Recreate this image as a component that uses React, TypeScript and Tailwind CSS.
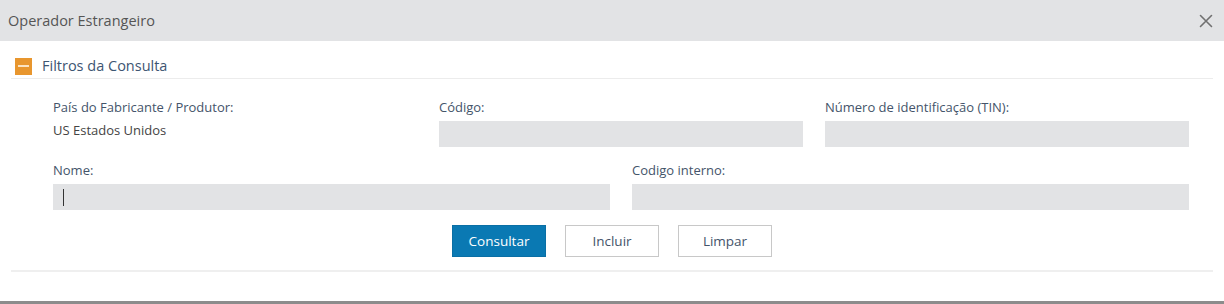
import React from "react";

export default function App() {
  const font = { fontFamily: '"Open Sans", "Noto Sans", sans-serif' };
  return (
    <div className="w-[1224px] h-[304px] bg-white flex flex-col border-b-[3px] border-[#8c8c8c]" style={font}>
      <div className="h-[41px] bg-[#e2e3e5] flex items-center justify-between pl-[8px] pr-[10px]">
        <span className="text-[14.5px] text-[#555]">Operador Estrangeiro</span>
        <svg width="14" height="14" viewBox="0 0 14 14" className="mr-[1px]">
          <path d="M1.5 1.5 L12.5 12.5 M12.5 1.5 L1.5 12.5" stroke="#707070" strokeWidth="1.6" strokeLinecap="round" />
        </svg>
      </div>
      <div className="mx-[11px] mt-[16px] h-[18px] flex items-center border-b border-[#ececec] pb-[3px] box-content">
        <div className="ml-[4px] w-[17px] h-[17px] bg-[#e8962e] flex items-center justify-center">
          <div className="w-[11px] h-[2px] bg-[#fbe3c2]" />
        </div>
        <span className="ml-[10px] text-[14.5px] text-[#3d5572]">Filtros da Consulta</span>
      </div>
      <div className="ml-[53px] w-[1136px] mt-[18px] grid grid-cols-3 gap-x-[22px] text-[13px]">
        <div className="flex flex-col">
          <span className="h-[20px] leading-[20px] text-[#44546a]">País do Fabricante / Produtor:</span>
          <span className="mt-[3px] leading-[20px] text-[#444]">US Estados Unidos</span>
        </div>
        <div className="flex flex-col">
          <span className="h-[20px] leading-[20px] text-[#44546a]">Código:</span>
          <div className="mt-[4px] h-[26px] bg-[#e2e3e5]" />
        </div>
        <div className="flex flex-col">
          <span className="h-[20px] leading-[20px] text-[#44546a]">Número de identificação (TIN):</span>
          <div className="mt-[4px] h-[26px] bg-[#e2e3e5]" />
        </div>
      </div>
      <div className="ml-[53px] w-[1136px] mt-[13px] grid grid-cols-2 gap-x-[22px] text-[13px]">
        <div className="flex flex-col">
          <span className="h-[20px] leading-[20px] text-[#44546a]">Nome:</span>
          <div className="mt-[4px] h-[26px] bg-[#e2e3e5] flex items-center pl-[10px]">
            <div className="w-[1px] h-[17px] bg-[#333]" />
          </div>
        </div>
        <div className="flex flex-col">
          <span className="h-[20px] leading-[20px] text-[#44546a]">Codigo interno:</span>
          <div className="mt-[4px] h-[26px] bg-[#e2e3e5]" />
        </div>
      </div>
      <div className="mt-[15px] flex justify-center gap-[19px] text-[13.5px]">
        <button className="w-[94px] h-[32px] bg-[#0a79b3] text-white border border-[#0a6fa5]">Consultar</button>
        <button className="w-[94px] h-[32px] bg-white text-[#44546a] border border-[#c8c8c8]">Incluir</button>
        <button className="w-[94px] h-[32px] bg-white text-[#44546a] border border-[#c8c8c8]">Limpar</button>
      </div>
      <div className="mx-[11px] mt-[13px] border-b-2 border-[#efefef]" />
    </div>
  );
}
